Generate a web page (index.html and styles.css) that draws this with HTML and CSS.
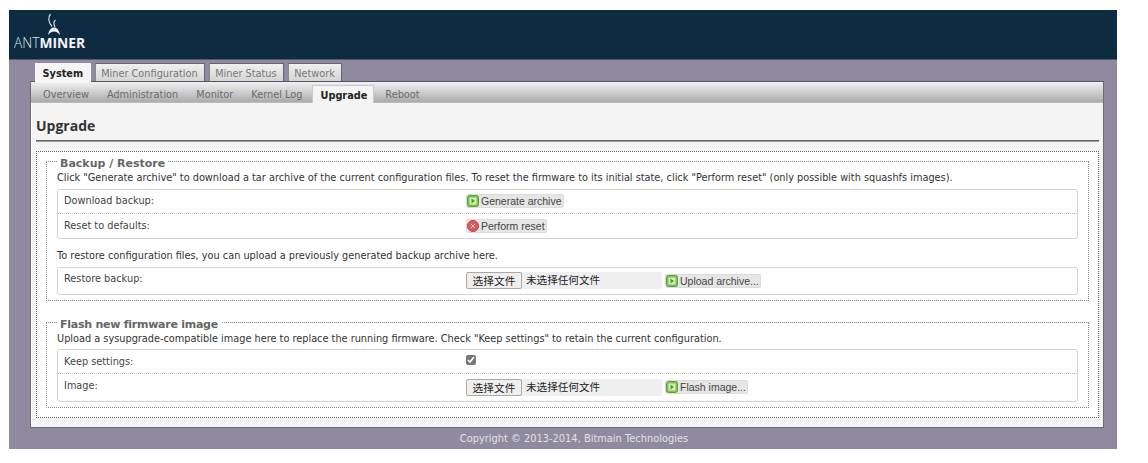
FILE: index.html
```html
<!DOCTYPE html>
<html lang="en">
<head>
<meta charset="utf-8">
<title>Upgrade</title>
<link rel="stylesheet" href="styles.css">
</head>
<body>
<div class="page">
  <header class="header">
    <div class="logo">
      <svg class="ant" viewBox="0 0 24 24" width="24" height="24" aria-hidden="true">
        <path d="M8.500 1 C6 4 6 9 10 13.500" fill="none" stroke="#d8dde2" stroke-width="1.200"/>
        <path d="M13.500 7 C11.500 8.500 11.500 11 13 14" fill="none" stroke="#d8dde2" stroke-width="1.200"/>
        <path d="M6 22 C7 17 9 14.500 12 14.500 C15 14.500 17 17 18 22 C16 19.500 14 18.500 12 18.500 C10 18.500 8 19.500 6 22 Z" fill="#eef1f3"/>
      </svg>
      <div class="logo-text">ANT<b>MINER</b></div>
    </div>
  </header>
  <div class="band">
    <nav class="tabs">
      <a class="tab active">System</a>
      <a class="tab">Miner Configuration</a>
      <a class="tab">Miner Status</a>
      <a class="tab">Network</a>
    </nav>
    <main class="panel">
      <nav class="subtabs">
        <a class="sub">Overview</a>
        <a class="sub">Administration</a>
        <a class="sub">Monitor</a>
        <a class="sub">Kernel Log</a>
        <a class="sub active">Upgrade</a>
        <a class="sub">Reboot</a>
      </nav>
      <div class="content">
        <h2 class="title">Upgrade</h2>
        <div class="outer">
          <fieldset class="set">
            <legend>Backup / Restore</legend>
            <p class="desc">Click "Generate archive" to download a tar archive of the current configuration files. To reset the firmware to its initial state, click "Perform reset" (only possible with squashfs images).</p>
            <div class="box">
              <div class="row"><span class="label">Download backup:</span><span class="field"><button class="btn"><svg class="ico" viewBox="0 0 12 12"><rect x=".5" y=".5" width="11" height="11" rx="2" fill="#7cc04f" stroke="#5f9e3c"/><rect x="2.500" y="2.500" width="7" height="7" fill="#d9eeb8"/><path d="M4.500 3.500l3.500 2.500-3.500 2.500z" fill="#4c9a2a"/></svg>Generate archive</button></span></div>
              <div class="row"><span class="label">Reset to defaults:</span><span class="field"><button class="btn"><svg class="ico" viewBox="0 0 12 12"><circle cx="6" cy="6" r="5.500" fill="#dc5a5e" stroke="#bd4145"/><path d="M4 4l4 4M8 4l-4 4" stroke="#f6d0d0" stroke-width="1"/></svg>Perform reset</button></span></div>
            </div>
            <p class="desc gap">To restore configuration files, you can upload a previously generated backup archive here.</p>
            <div class="box">
              <div class="row tall"><span class="label">Restore backup:</span><span class="field"><span class="file"><span class="choose">选择文件</span><span class="none">未选择任何文件</span></span><button class="btn"><svg class="ico" viewBox="0 0 12 12"><rect x=".5" y=".5" width="11" height="11" rx="2" fill="#7cc04f" stroke="#5f9e3c"/><rect x="2.500" y="2.500" width="7" height="7" fill="#d9eeb8"/><path d="M4.500 3.500l3.500 2.500-3.500 2.500z" fill="#4c9a2a"/></svg>Upload archive...</button></span></div>
            </div>
          </fieldset>
          <fieldset class="set second">
            <legend>Flash new firmware image</legend>
            <p class="desc">Upload a sysupgrade-compatible image here to replace the running firmware. Check "Keep settings" to retain the current configuration.</p>
            <div class="box">
              <div class="row"><span class="label keep">Keep settings:</span><span class="field"><input class="check" type="checkbox" checked></span></div>
              <div class="row tall2"><span class="label">Image:</span><span class="field"><span class="file"><span class="choose">选择文件</span><span class="none">未选择任何文件</span></span><button class="btn"><svg class="ico" viewBox="0 0 12 12"><rect x=".5" y=".5" width="11" height="11" rx="2" fill="#7cc04f" stroke="#5f9e3c"/><rect x="2.500" y="2.500" width="7" height="7" fill="#d9eeb8"/><path d="M4.500 3.500l3.500 2.500-3.500 2.500z" fill="#4c9a2a"/></svg>Flash image...</button></span></div>
            </div>
          </fieldset>
        </div>
      </div>
    </main>
    <footer class="foot">Copyright © 2013-2014, Bitmain Technologies</footer>
  </div>
</div>
</body>
</html>
```
FILE: styles.css
```css
* { box-sizing: border-box; }
html, body { margin: 0; background: #fff; }
body { font-family: "DejaVu Sans", Verdana, sans-serif; font-size: 9.75px; color: #333; }
.page { width: 1108px; height: 439px; margin: 10px 0 0 9px; display: flex; flex-direction: column; }
.header { height: 49px; background: #0d2c42; flex: none; }
.logo { padding-left: 5px; display: flex; flex-direction: column; align-items: flex-start; }
.ant { margin: 3px 0 0 28px; display: block; height: 24px; }
.logo-text { font-family: "Open Sans", "Liberation Sans", sans-serif; font-size: 13.8px; line-height: 14px; color: #dfe4e8; font-weight: 300; white-space: nowrap; margin-top: -1px; }
.logo-text b { font-weight: 700; color: #f2f4f6; }
.band { flex: 1; background: #8f8a9f; padding: 3px 13px 0 21px; display: flex; flex-direction: column; border-top: 1px solid #55596b; }
.tabs { display: flex; gap: 4px; padding-left: 5px; height: 18px; flex: none; }
.tab { border: 1px solid #666; border-bottom: 0; border-left-color: #888; color: #777; padding: 3px 6px 0 5.5px; line-height: 13px; height: 18px; white-space: nowrap; background: linear-gradient(#f0f0f0, #d4d4d4); }
.tab.active { background: #f5f5f5; color: #222; font-weight: 700; border: 0; padding: 4px 7.5px 0; position: relative; z-index: 1; height: 20px; }
.panel { height: 347px; background: #f4f4f5; border: 1px solid #6a6a78; border-top-color: #55556a; box-shadow: inset 1px 0 0 #fff; display: flex; flex-direction: column; flex: none; }
.subtabs { height: 21px; flex: none; display: flex; padding-left: 4px; background: linear-gradient(#f1f1f1, #ababab); border-bottom: 1px solid #bbb; }
.sub { padding: 6px 7px 0 8px; color: #6b6b6b; line-height: 13px; margin-right: 3px; white-space: nowrap; }
.sub.active { background: #f4f4f5; border: 1px solid #c9c9c9; border-bottom: 0; margin-top: 3px; height: 18px; color: #222; font-weight: 700; padding: 3px 6px 0 7px; }
.content { padding: 0 4px 0 5px; flex: 1; }
.title { font-family: "Open Sans", "DejaVu Sans", sans-serif; font-size: 14px; line-height: 16px; font-weight: 700; color: #333; margin: 0; padding: 15px 0 0; height: 38px; border-bottom: 1px solid #666; box-shadow: 0 1px 0 #999; }
.outer { margin-top: 10px; height: 267px; border: 1px dotted #666; background: #fff; padding: 0 9px; }
.set { border: 1px dotted #888; margin: 1px 0 0; padding: 1px 10px 0; height: 148px; min-width: 0; background: #fff; }
.set.second { margin-top: 13px; height: 94px; }
.set legend { padding: 4px 3px 0; font-size: 11px; line-height: 13px; font-weight: 700; color: #666; }
.second legend { letter-spacing: -.25px; }
.desc { margin: 0; line-height: 13px; color: #333; white-space: nowrap; height: 14px; }
.desc.gap { margin-top: 10px; margin-bottom: 4px; }
.box { margin-top: 4px; border: 1px solid #d4d4d4; border-radius: 3px; background: #fff; }
.second .box { margin-top: 3px; }
.desc.gap + .box { margin-top: 0; }
.row { display: flex; height: 23px; padding-left: 6px; }
.row + .row { height: 25px; border-top: 1px dotted #bbb; }
.row.tall { height: 26px; }
.row.tall2 { height: 28px; }
.label { width: 402px; flex: none; padding-top: 4px; line-height: 13px; color: #444; white-space: nowrap; }
.row + .row .label, .label.keep { padding-top: 5px; }
.field { display: flex; align-items: flex-start; padding-top: 3px; }
.row + .row .field, .tall .field { padding-top: 4px; }
.row.tall2 .field { padding-top: 5px; }
.btn { font-family: "Liberation Sans", Arial, sans-serif; font-size: 10.5px; line-height: 13px; height: 14px; color: #444; background: #e6e6e6; border: 1px solid #dcdcdc; border-radius: 2px; padding: 0 1px 0 0; display: inline-flex; align-items: center; white-space: nowrap; margin-top: 1px; }
.tall .btn { margin-top: 2px; }
.ico { width: 12px; height: 12px; margin-right: 2px; flex: none; }
.file { display: flex; width: 196px; margin-right: 3px; background: #efefef; height: 17px; }
.choose { width: 56px; height: 17px; flex: none; background: #efefef; border: 1px solid #a9a9a9; border-radius: 2px; text-align: center; font-family: "Noto Sans CJK SC", sans-serif; font-size: 10.7px; line-height: 15px; color: #222; }
.none { padding-left: 4px; font-family: "Noto Sans CJK SC", sans-serif; font-size: 10.6px; line-height: 16px; color: #222; white-space: nowrap; }
.check { margin: 2px 0 0; width: 10px; height: 10px; accent-color: #777; }
.foot { flex: 1; text-align: center; color: #e2e2e2; font-size: 9.85px; line-height: 13px; padding: 4px 0 0 14px; }
```
